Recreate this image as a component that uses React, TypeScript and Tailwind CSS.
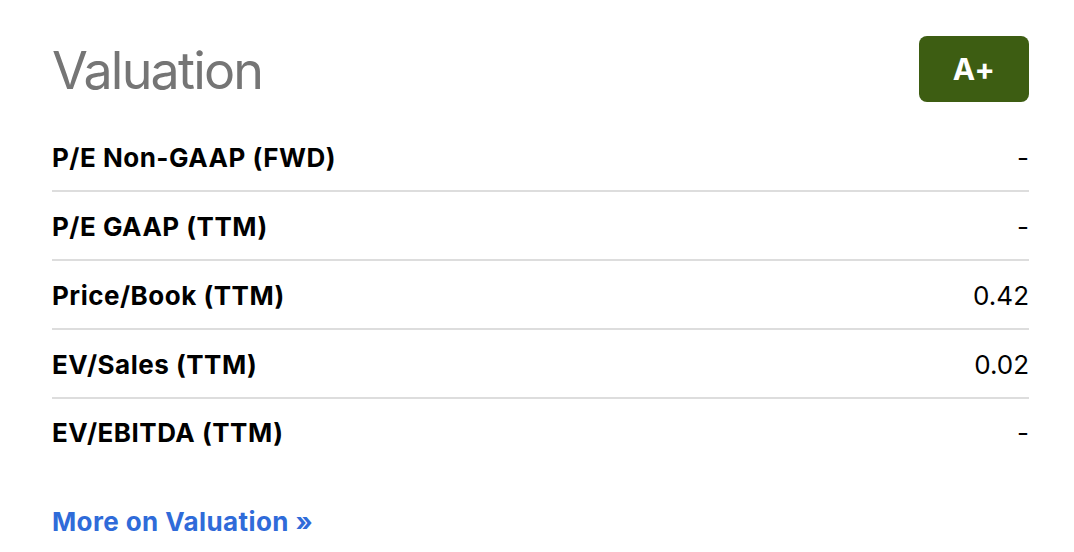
import React from 'react';

const rows = [
  { label: 'P/E Non-GAAP (FWD)', value: '-' },
  { label: 'P/E GAAP (TTM)', value: '-' },
  { label: 'Price/Book (TTM)', value: '0.42' },
  { label: 'EV/Sales (TTM)', value: '0.02' },
  { label: 'EV/EBITDA (TTM)', value: '-' },
];

export default function App() {
  return (
    <div className="min-h-screen bg-white font-['Inter','Roboto',sans-serif] text-black">
      <div className="w-[977px] ml-[52px] pt-[36px]">
        <div className="flex items-center justify-between h-[66px]">
          <h1 className="text-[52px] font-normal text-[#757575] tracking-[-1.8px] leading-none mt-[4px]">Valuation</h1>
          <div className="w-[110px] h-[66px] rounded-[8px] bg-[#3d5d12] flex items-center justify-center text-white text-[30px] font-bold tracking-[0.5px]">
            A+
          </div>
        </div>
        <div className="mt-[21px]">
          {rows.map((r, i) => (
            <div
              key={r.label}
              className={`flex items-center justify-between ${i < rows.length - 1 ? 'h-[69px] pt-[2px] border-b-2 border-[#dddddd]' : 'h-[67px]'}`}
            >
              <span className="text-[26px] font-bold tracking-[0.5px]">{r.label}</span>
              <span className="text-[26px]">{r.value}</span>
            </div>
          ))}
        </div>
        <a href="#" className="block mt-[41px] text-[26px] font-bold text-[#2f6bd9] leading-[30px] tracking-[0.4px]">
          More on Valuation »
        </a>
      </div>
    </div>
  );
}
